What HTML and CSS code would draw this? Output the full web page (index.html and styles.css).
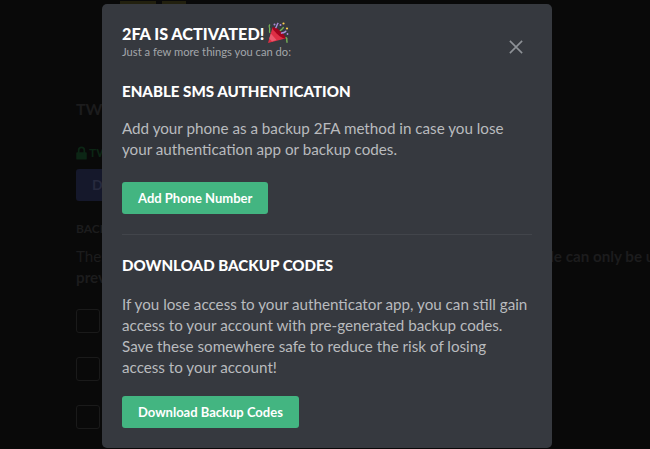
FILE: index.html
```html
<!DOCTYPE html>
<html lang="en">
<head>
<meta charset="utf-8">
<title>2FA is activated</title>
<link rel="stylesheet" href="styles.css">
</head>
<body>
<main class="page">
  <div class="top-strip"><span class="top-pill"></span><span class="top-pill top-pill-b"></span></div>
  <h2 class="bg-title">TWO-FACTOR AUTH</h2>
  <div class="bg-status">
    <svg class="bg-lock" viewBox="0 0 12 16" aria-hidden="true"><path d="M6 0.5a4.2 4.2 0 0 0-4.2 4.2V7H1a1 1 0 0 0-1 1v6.5a1 1 0 0 0 1 1h10a1 1 0 0 0 1-1V8a1 1 0 0 0-1-1h-.8V4.7A4.2 4.2 0 0 0 6 .5zm0 2a2.2 2.2 0 0 1 2.2 2.2V7H3.800V4.700A2.200 2.200 0 0 1 6 2.500z"/></svg>
    <span>TWO-FACTOR</span>
  </div>
  <div class="bg-btn">Disable</div>
  <div class="bg-label">BACKUP CODES</div>
  <p class="bg-text">These codes let you sign in if you later lose your authenticator. <b>Each code can only be used once,</b><br><b>previously generated codes no longer work.</b></p>
  <div class="bg-checks"><span class="bg-check"></span><span class="bg-check"></span><span class="bg-check"></span></div>
</main>
<section class="modal" role="dialog">
  <header class="modal-head">
    <div>
      <h1 class="modal-title">2FA IS ACTIVATED!
        <svg class="popper" viewBox="0 0 24 24" aria-hidden="true">
          <path fill="#dd2e44" d="M2 22 6.500 6.500 19.500 17.500z"/>
          <path fill="#ea596e" d="M3.300 17.500 4.800 12.500 10.500 19 6 20.500z"/>
          <path fill="#a0041e" d="M6.500 6.500c1.200-1 5 .800 8 3.500 3 2.800 5.800 6.500 5 7.500-1 1-5.300-1.500-8-4.200-3-3-5.800-5.800-5-6.800z"/>
          <path fill="none" stroke="#77b255" stroke-width="1.300" d="M4 12C2.600 10 4.500 8.500 3.400 6.500 2.900 5.500 3 4.500 4 3.500"/>
          <path fill="none" stroke="#77b255" stroke-width="1.400" d="M19.500 16.500c1.300.2 1.500 1.300 1.300 2.300-.2 1 .6 1.800 0 3"/>
          <path fill="none" stroke="#77b255" stroke-width="1.300" d="M14 10c.8-1.200 1.600-1.500 2.500-2.300.6-.6.600-1 1-1.700"/>
          <path fill="none" stroke="#aa8dd8" stroke-width="1.500" d="M9.500 7c1-1 1.200-2 1.500-3 .2-.8.800-1.500 1.300-2"/>
          <path fill="none" stroke="#aa8dd8" stroke-width="1.500" d="M15 12.500c1-.8 1.800-.6 3-1 .8-.2 1.200-1 2.300-1.500"/>
          <circle cx="8.500" cy="3.500" r="1" fill="#aa8dd8"/>
          <circle cx="17.500" cy="2.500" r="1.100" fill="#ffcc4d"/>
          <circle cx="21" cy="7.500" r="1.100" fill="#ffcc4d"/>
          <circle cx="14.500" cy="4" r="1" fill="#aa8dd8"/>
          <circle cx="21.500" cy="13" r=".900" fill="#aa8dd8"/>
        </svg>
      </h1>
      <p class="modal-sub">Just a few more things you can do:</p>
    </div>
    <svg class="close" viewBox="0 0 16 16" aria-hidden="true"><path d="M1 1 15 15M15 1 1 15"/></svg>
  </header>
  <h3 class="heading">ENABLE SMS AUTHENTICATION</h3>
  <p class="copy">Add your phone as a backup 2FA method in case you lose<br>your authentication app or backup codes.</p>
  <button class="action">Add Phone Number</button>
  <hr class="rule">
  <h3 class="heading">DOWNLOAD BACKUP CODES</h3>
  <p class="copy copy-long">If you lose access to your authenticator app, you can still gain<br>access to your account with pre-generated backup codes.<br>Save these somewhere safe to reduce the risk of losing<br>access to your account!</p>
  <button class="action action-last">Download Backup Codes</button>
</section>
</body>
</html>
```
FILE: styles.css
```css
* { box-sizing: border-box; }
html, body { margin: 0; height: 100%; }
body {
  background: #090909;
  font-family: Lato, sans-serif;
  overflow: hidden;
  position: relative;
}
.page { padding: 0 0 0 76px; color: #1c1c1d; height: 449px; overflow: hidden; }
.top-strip { height: 4px; display: flex; gap: 6px; align-items: center; padding-left: 44px; }
.top-pill { width: 36px; height: 3px; background: #22200e; }
.top-pill-b { width: 24px; }
.bg-title { margin: 95px 0 0; font-size: 16px; line-height: 20px; font-weight: 700; white-space: nowrap; }
.bg-status { margin-top: 26px; display: flex; align-items: center; gap: 2px; color: #0c2615; font-size: 12px; font-weight: 700; line-height: 16px; white-space: nowrap; }
.bg-lock { width: 11px; height: 14px; fill: #0c2615; }
.bg-btn { margin-top: 8px; width: 120px; height: 32px; background: #15182b; color: #272a3e; border-radius: 3px; font-size: 14px; line-height: 32px; padding-left: 16px; font-weight: 700; }
.bg-label { margin-top: 21px; font-size: 12px; line-height: 14px; font-weight: 700; }
.bg-text { margin: 10px 0 0; font-size: 15.200px; line-height: 21px; white-space: nowrap; }
.bg-text b { font-weight: 700; }
.bg-checks { margin-top: 21px; display: flex; flex-direction: column; gap: 24px; }
.bg-check { display: block; width: 24px; height: 24px; border: 1px solid #1a1a1a; border-radius: 3px; }

.modal {
  position: absolute;
  left: 102px;
  top: 4px;
  width: 450px;
  height: 444px;
  background: #36393f;
  border-radius: 5px;
  padding: 19px 20px 0;
}
.modal-head { display: flex; justify-content: space-between; align-items: flex-start; }
.modal-title { margin: 0; font-size: 16.200px; line-height: 22px; font-weight: 900; color: #fff; display: flex; align-items: center; gap: 2px; }
.popper { width: 24px; height: 24px; margin-top: -2px; }
.modal-sub { margin: 0; font-size: 11.200px; line-height: 14px; color: #a3a6aa; }
.close { width: 14px; height: 14px; margin: 17px 9px 0 0; stroke: #8e9297; stroke-width: 1.800; fill: none; }
.heading { margin: 0; font-size: 15.100px; line-height: 22px; font-weight: 900; color: #fff; }
.modal-head + .heading { margin-top: 21px; }
.copy { margin: 16px 0 0; font-size: 15.200px; line-height: 21.300px; color: #b9bbbe; white-space: nowrap; }
.copy-long { margin-top: 18px; }
.action {
  display: block;
  margin-top: 21px;
  height: 32px;
  padding: 0 16px;
  border: 0;
  border-radius: 3px;
  background: #43b581;
  color: #fff;
  font: 700 13px/32px Lato, sans-serif;
}
.action-last { margin-top: 17px; }
.rule { margin: 20px 0 19px; border: 0; border-top: 1px solid #42454b; width: 410px; }
```
